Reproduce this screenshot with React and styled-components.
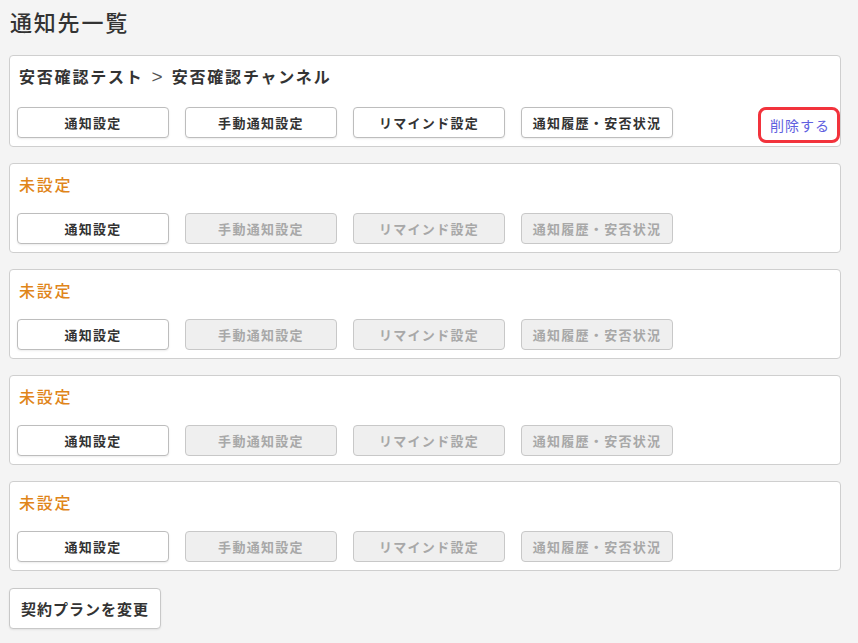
import React from "react";
import styled, { createGlobalStyle } from "styled-components";

const Global = createGlobalStyle`
  html, body { margin: 0; padding: 0; background: #f4f4f4; }
  body { font-family: "Noto Sans CJK JP", "Noto Sans", sans-serif; color: #333; }
  * { box-sizing: border-box; }
`;

const Page = styled.div`
  padding: 5px 17px 16px 9px;
  display: flex;
  flex-direction: column;
  align-items: stretch;
`;

const Title = styled.h1`
  margin: 0 0 18px 1px;
  font-size: 22px;
  line-height: 32px;
  font-weight: 500;
  letter-spacing: 1.8px;
  color: #333;
`;

const List = styled.div`
  display: flex;
  flex-direction: column;
  gap: 16px;
`;

const Card = styled.section`
  background: #fff;
  border: 1px solid #cfcfcf;
  border-radius: 4px;
  padding: 8px 8px 8px 7px;
`;

const CardTitle = styled.div`
  font-size: 16px;
  line-height: 24px;
  letter-spacing: 1.8px;
  font-weight: ${(p) => (p.$unset ? 500 : 700)};
  color: ${(p) => (p.$unset ? "#e0851a" : "#333")};
  padding-left: 2px;
  margin-bottom: ${(p) => (p.$unset ? "17px" : "19px")};
`;

const Sep = styled.span`
  font-family: "Liberation Sans", "Noto Sans", sans-serif;
  font-size: 19px;
  line-height: 20px;
  font-weight: 400;
  color: #555;
  margin: 0 9px 0 8px;
  letter-spacing: 0;
`;

const Row = styled.div`
  display: flex;
  align-items: flex-start;
  gap: 16px;
`;

const Btn = styled.button`
  width: 152px;
  height: 31px;
  padding: 0;
  border: 1px solid ${(p) => (p.disabled ? "#c8c8c8" : "#bdbdbd")};
  border-radius: 4px;
  background: ${(p) => (p.disabled ? "#efefef" : "#fff")};
  color: ${(p) => (p.disabled ? "#a8a8a8" : "#333")};
  font-family: inherit;
  font-size: 13px;
  font-weight: 700;
  letter-spacing: 0.1em;
  box-shadow: ${(p) => (p.disabled ? "none" : "0 1px 2px rgba(0,0,0,0.08)")};
  cursor: ${(p) => (p.disabled ? "default" : "pointer")};
`;

const DeleteLink = styled.button`
  margin-left: auto;
  margin-right: -5px;
  margin-top: 3px;
  margin-bottom: -2px;
  height: 30px;
  padding: 0 7px 0 9px;
  background: #fff;
  border: none;
  border-radius: 5px;
  outline: 3px solid #f2333c;
  font-family: inherit;
  font-size: 14px;
  letter-spacing: 1px;
  color: #6060e0;
  cursor: pointer;
`;

const PlanBtn = styled.button`
  margin-top: 17px;
  align-self: flex-start;
  width: 152px;
  height: 41px;
  padding: 0;
  background: #fff;
  border: 1px solid #c8c8c8;
  border-radius: 4px;
  box-shadow: 0 1px 2px rgba(0,0,0,0.08);
  font-family: inherit;
  font-size: 15px;
  font-weight: 700;
  letter-spacing: 1px;
  color: #333;
  cursor: pointer;
`;

const labels = ["通知設定", "手動通知設定", "リマインド設定", "通知履歴・安否状況"];

function Buttons({ configured }) {
  return labels.map((l, i) => (
    <Btn key={l} disabled={!configured && i > 0}>
      {l}
    </Btn>
  ));
}

export default function App() {
  return (
    <>
      <Global />
      <Page>
        <Title>通知先一覧</Title>
        <List>
          <Card>
            <CardTitle>
              安否確認テスト<Sep>&gt;</Sep>安否確認チャンネル
            </CardTitle>
            <Row>
              <Buttons configured />
              <DeleteLink>削除する</DeleteLink>
            </Row>
          </Card>
          {[0, 1, 2, 3].map((i) => (
            <Card key={i}>
              <CardTitle $unset>未設定</CardTitle>
              <Row>
                <Buttons configured={false} />
              </Row>
            </Card>
          ))}
        </List>
        <PlanBtn>契約プランを変更</PlanBtn>
      </Page>
    </>
  );
}
